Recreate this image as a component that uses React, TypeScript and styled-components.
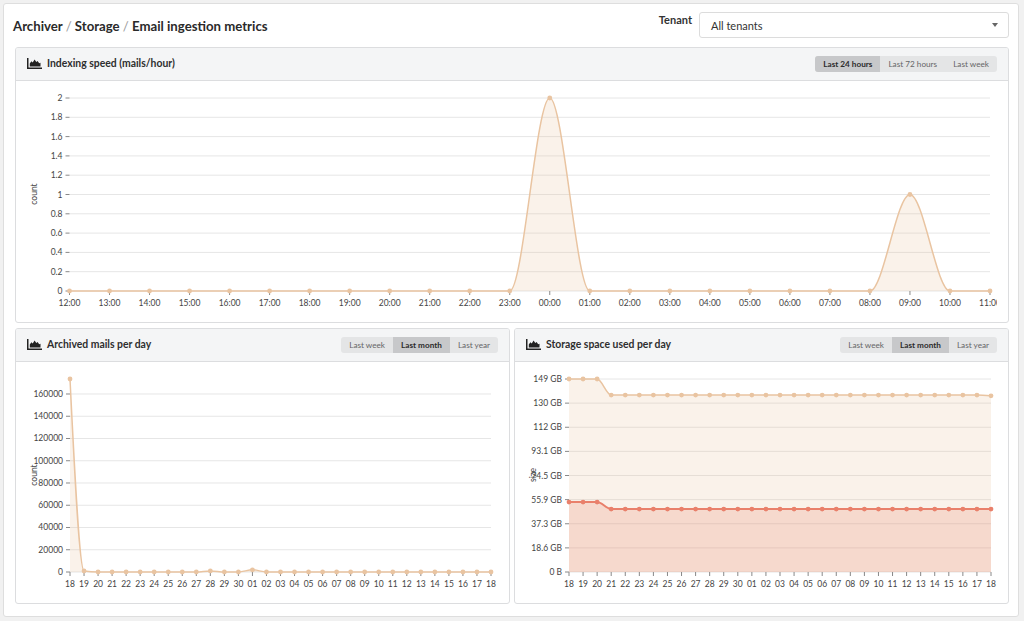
import styled, { createGlobalStyle } from "styled-components"

const GlobalStyle = createGlobalStyle`
    html, body {
        margin: 0;
        padding: 0;
        background: #f1f1f1;
    }
    body {
        font-family: Lato, "Open Sans", "Liberation Sans", sans-serif;
        color: #333;
    }
    * {
        box-sizing: border-box;
    }
`

const Page = styled.div`
    padding: 3px 5px 4px 3px;
`

const Card = styled.main`
    background: #ffffff;
    border: 1px solid #dedede;
    border-radius: 3px;
    padding: 8px 9px 12px 11px;
    height: 614px;
    display: flex;
    flex-direction: column;
`

const TopBar = styled.header`
    display: flex;
    align-items: center;
    justify-content: space-between;
    margin-bottom: 9px;
    margin-left: -2px;
`

const Title = styled.h1`
    margin: 2px 0 0;
    font-size: 13.2px;
    font-weight: 700;
    color: #2a2a2a;
    span {
        color: #9b9b9b;
        font-weight: 400;
    }
`

const TenantForm = styled.form`
    display: flex;
    align-items: flex-start;
    gap: 7px;
    margin: 0;
    label {
        font-size: 11px;
        font-weight: 700;
        color: #333;
        padding-top: 1px;
    }
`

const Select = styled.div`
    width: 310px;
    height: 26px;
    border: 1px solid #dcdcdc;
    border-radius: 3px;
    background: #fff;
    display: flex;
    align-items: center;
    justify-content: space-between;
    padding: 0 10px 0 11px;
    font-size: 11px;
    color: #333;
    &::after {
        content: "";
        border-left: 3px solid transparent;
        border-right: 3px solid transparent;
        border-top: 4px solid #666;
    }
`

const Panel = styled.section`
    border: 1px solid #dcdddf;
    border-radius: 3px;
    background: #fff;
    height: 276px;
    display: flex;
    flex-direction: column;
    overflow: hidden;
`

const PanelHeader = styled.div`
    height: 33px;
    flex: none;
    background: #f4f5f6;
    border-bottom: 1px solid #dcdddf;
    display: flex;
    align-items: center;
    justify-content: space-between;
    padding: 0 11px;
`

const PanelTitle = styled.h2`
    margin: 0 0 1px;
    display: flex;
    align-items: center;
    gap: 5px;
    font-size: 10.4px;
    line-height: 1;
    font-weight: 700;
    color: #2e2e2e;
`

const ButtonGroup = styled.div`
    display: flex;
    background: #e4e5e6;
    border-radius: 3px;
    overflow: hidden;
`

const RangeButton = styled.button<{ $active?: boolean }>`
    border: none;
    margin: 0;
    height: 16px;
    padding: 0 8px;
    font-family: inherit;
    font-size: 8.2px;
    font-weight: ${p => (p.$active ? 700 : 400)};
    color: ${p => (p.$active ? "#2b2b2b" : "#666")};
    background: ${p => (p.$active ? "#c7c8ca" : "transparent")};
`

const PanelBody = styled.div`
    flex: 1;
    display: flex;
`

const Row = styled.div`
    display: grid;
    grid-template-columns: 1fr 1fr;
    gap: 4px;
    margin-top: 5px;
`

const ChartSvg = styled.svg`
    display: block;
    font-family: Lato, "Open Sans", "Liberation Sans", sans-serif;
    text {
        font-size: 8.5px;
        fill: #444;
    }
`

const AreaIcon = () => (
    <svg width="15" height="11" viewBox="0 0 15 11">
        <path d="M0 0h1.5v9.5H15V11H0z" fill="#222" />
        <path d="M2.8 8.6V5.4l1.6-2.2 1.3 1.4 1.9-3.2 1.7 2.6 1.3-1.1 1.6 2.4 1.3-.6v3.9z" fill="#222" />
    </svg>
)

const TOP = 17
const BOTTOM = 210

type Series = { values: number[]; stroke: string; fill: string; width: number }

type ChartProps = {
    width: number
    left: number
    right: number
    yMax: number
    yTicks: { value: number; label: string }[]
    xLabels: string[]
    series: Series[]
    yTitle: string
}

// d3 style monotoneX curve through screen points
function monotone(pts: [number, number][]) {
    const n = pts.length
    const sign = (v: number) => (v < 0 ? -1 : v > 0 ? 1 : 0)
    const t: number[] = new Array(n).fill(0)
    for (let i = 1; i < n - 1; i++) {
        const h0 = pts[i][0] - pts[i - 1][0]
        const h1 = pts[i + 1][0] - pts[i][0]
        const s0 = (pts[i][1] - pts[i - 1][1]) / h0
        const s1 = (pts[i + 1][1] - pts[i][1]) / h1
        const p = (s0 * h1 + s1 * h0) / (h0 + h1)
        t[i] = (sign(s0) + sign(s1)) * Math.min(Math.abs(s0), Math.abs(s1), 0.5 * Math.abs(p)) || 0
    }
    const h = pts[1][0] - pts[0][0]
    t[0] = (3 * (pts[1][1] - pts[0][1]) / h - t[1]) / 2
    const hl = pts[n - 1][0] - pts[n - 2][0]
    t[n - 1] = (3 * (pts[n - 1][1] - pts[n - 2][1]) / hl - t[n - 2]) / 2
    let d = `M${pts[0][0]},${pts[0][1]}`
    for (let i = 0; i < n - 1; i++) {
        const [x0, y0] = pts[i]
        const [x1, y1] = pts[i + 1]
        const dx = (x1 - x0) / 3
        d += `C${x0 + dx},${y0 + dx * t[i]} ${x1 - dx},${y1 - dx * t[i + 1]} ${x1},${y1}`
    }
    return d
}

const LineChart = ({ width, left, right, yMax, yTicks, xLabels, series, yTitle }: ChartProps) => {
    const n = xLabels.length
    const x = (i: number) => left + (i * (right - left)) / (n - 1)
    const y = (v: number) => BOTTOM - (v / yMax) * (BOTTOM - TOP)
    return (
        <ChartSvg width={width} height={241}>
            {yTicks.map(tk => (
                <g key={tk.label}>
                    <line x1={left} x2={right} y1={y(tk.value)} y2={y(tk.value)} stroke="#e6e6e6" />
                    <line x1={left - 4} x2={left} y1={y(tk.value)} y2={y(tk.value)} stroke="#888" />
                    <text x={left - 7} y={y(tk.value)} textAnchor="end" dominantBaseline="central">{tk.label}</text>
                </g>
            ))}
            {xLabels.map((l, i) => (
                <g key={i}>
                    <line x1={x(i)} x2={x(i)} y1={BOTTOM} y2={BOTTOM + 4} stroke="#888" />
                    <text x={x(i)} y={222} textAnchor="middle" dominantBaseline="central">{l}</text>
                </g>
            ))}
            {series.map((s, k) => {
                const line = monotone(s.values.map((v, i) => [x(i), y(v)] as [number, number]))
                return (
                    <g key={k}>
                        <path d={`${line}L${right},${BOTTOM}L${left},${BOTTOM}Z`} fill={s.fill} />
                        <path d={line} fill="none" stroke={s.stroke} strokeWidth={s.width} />
                        {s.values.map((v, i) => (
                            <circle key={i} cx={x(i)} cy={y(v)} r={2.4} fill={s.stroke} />
                        ))}
                    </g>
                )
            })}
            <text x={17.5} y={113} textAnchor="middle" dominantBaseline="central" transform="rotate(-90 17.5 113)">{yTitle}</text>
        </ChartSvg>
    )
}

const TAN = "#e9c4a1"
const TAN_FILL = "rgba(232, 190, 150, 0.2)"
const RED = "#e9806b"
const RED_FILL = "rgba(232, 128, 107, 0.22)"

const hours = Array.from({ length: 24 }, (_, i) => `${String((i + 12) % 24).padStart(2, "0")}:00`)
const speed = hours.map((_, i) => (i === 12 ? 2 : i === 21 ? 1 : 0))

const days = [
    ...Array.from({ length: 13 }, (_, i) => String(18 + i)),
    ...Array.from({ length: 18 }, (_, i) => String(i + 1).padStart(2, "0")),
]
const mails = days.map((_, i) => (i === 0 ? 173483 : i === 1 ? 900 : i === 10 ? 1000 : i === 13 ? 2000 : 0))

const GB = 149
const storageTicks = ["0 B", "18.6 GB", "37.3 GB", "55.9 GB", "74.5 GB", "93.1 GB", "112 GB", "130 GB", "149 GB"].map(
    (label, i) => ({ value: (i * GB) / 8, label })
)
const usedTotal = days.map((_, i) => (i < 3 ? 149 : i === 30 ? 136 : 136.6))
const usedIndex = days.map((_, i) => (i < 3 ? 54 : 48.6))

const Ranges = ({ items, active }: { items: string[]; active: string }) => (
    <ButtonGroup>
        {items.map(it => (
            <RangeButton key={it} type="button" $active={it === active}>{it}</RangeButton>
        ))}
    </ButtonGroup>
)

export default function App() {
    return (
        <Page>
            <GlobalStyle />
            <Card>
                <TopBar>
                    <Title>
                        Archiver <span>/</span> Storage <span>/</span> Email ingestion metrics
                    </Title>
                    <TenantForm>
                        <label>Tenant</label>
                        <Select>All tenants</Select>
                    </TenantForm>
                </TopBar>

                <Panel>
                    <PanelHeader>
                        <PanelTitle><AreaIcon />Indexing speed (mails/hour)</PanelTitle>
                        <Ranges items={["Last 24 hours", "Last 72 hours", "Last week"]} active="Last 24 hours" />
                    </PanelHeader>
                    <PanelBody>
                        <LineChart
                            width={981}
                            left={53.5}
                            right={974}
                            yMax={2}
                            yTicks={Array.from({ length: 11 }, (_, i) => ({ value: i * 0.2, label: String(Math.round(i * 2) / 10) }))}
                            xLabels={hours}
                            series={[{ values: speed, stroke: TAN, fill: TAN_FILL, width: 1.5 }]}
                            yTitle="count"
                        />
                    </PanelBody>
                </Panel>

                <Row>
                    <Panel>
                        <PanelHeader>
                            <PanelTitle><AreaIcon />Archived mails per day</PanelTitle>
                            <Ranges items={["Last week", "Last month", "Last year"]} active="Last month" />
                        </PanelHeader>
                        <PanelBody>
                            <LineChart
                                width={492}
                                left={54}
                                right={475}
                                yMax={173483}
                                yTicks={Array.from({ length: 9 }, (_, i) => ({ value: i * 20000, label: String(i * 20000) }))}
                                xLabels={days}
                                series={[{ values: mails, stroke: TAN, fill: TAN_FILL, width: 1.5 }]}
                                yTitle="count"
                            />
                        </PanelBody>
                    </Panel>
                    <Panel>
                        <PanelHeader>
                            <PanelTitle><AreaIcon />Storage space used per day</PanelTitle>
                            <Ranges items={["Last week", "Last month", "Last year"]} active="Last month" />
                        </PanelHeader>
                        <PanelBody>
                            <LineChart
                                width={493}
                                left={54}
                                right={476}
                                yMax={GB}
                                yTicks={storageTicks}
                                xLabels={days}
                                series={[
                                    { values: usedTotal, stroke: TAN, fill: TAN_FILL, width: 1.5 },
                                    { values: usedIndex, stroke: RED, fill: RED_FILL, width: 2 },
                                ]}
                                yTitle="size"
                            />
                        </PanelBody>
                    </Panel>
                </Row>
            </Card>
        </Page>
    )
}
